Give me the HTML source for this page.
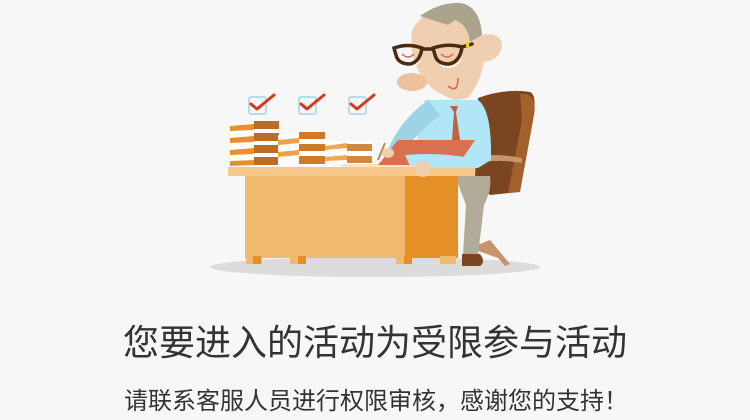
<!DOCTYPE html>
<html><head><meta charset="utf-8"><style>
html,body{margin:0;padding:0;background:#f7f7f7;width:750px;height:420px;overflow:hidden}
.t{position:absolute;left:0;width:750px;text-align:center;color:#333;font-family:"Liberation Sans","Noto Sans CJK SC",sans-serif}
</style></head><body>
<svg width="750" height="300" style="position:absolute;left:0;top:0" viewBox="0 0 750 300">
<ellipse cx="375" cy="267" rx="165" ry="10" fill="#dcdcdc"/>
<path d="M478 98 Q505 88 530 92 Q538 96 532 120 L518 192 L490 195 L475 178 Z" fill="#7a4520"/>
<path d="M520 94 Q538 92 534 115 L520 192 L508 193 L522 120 Z" fill="#a2602a"/>
<path d="M465 158 Q495 152 522 158 L522 163 Q495 158 470 165 Z" fill="#c9946a"/>
<path d="M490 240 L505 258 L510 264 L505 266 L498 258 L470 248 Z" fill="#c9946a"/>
<path d="M455 176 L490 176 Q492 190 484 205 L478 255 L463 255 L466 205 Z" fill="#b3ab99"/>
<path d="M462 254 L480 254 Q486 262 480 266 L462 266 Z" fill="#7a4520"/>
<rect x="228" y="167" width="247" height="9" fill="#f6c98b"/>
<rect x="245" y="176" width="160" height="82" fill="#f0b96c"/>
<rect x="405" y="176" width="53" height="82" fill="#e58f27"/>
<rect x="246" y="256" width="16" height="8" fill="#f0b96c"/><rect x="253" y="256" width="8" height="8" fill="#e58f27"/>
<rect x="290" y="256" width="16" height="8" fill="#f0b96c"/><rect x="298" y="256" width="8" height="8" fill="#e58f27"/>
<rect x="396" y="256" width="16" height="8" fill="#f0b96c"/><rect x="404" y="256" width="8" height="8" fill="#e58f27"/>
<rect x="440" y="256" width="16" height="8" fill="#f0b96c"/>
<g>
<rect x="230" y="122" width="48" height="44" fill="#fff"/>
<rect x="254" y="121" width="25" height="8" fill="#b86e26"/><rect x="254" y="133" width="25" height="8" fill="#b86e26"/><rect x="254" y="145" width="25" height="8" fill="#b86e26"/><rect x="254" y="157" width="25" height="8" fill="#b86e26"/>
<path d="M230 126 L254 124 L254 130 L230 131 Z M230 138 L254 136 L254 142 L230 143 Z M230 150 L254 148 L254 154 L230 155 Z M230 161 L254 160 L254 165 L230 166 Z" fill="#e8902c"/>
<rect x="278" y="135" width="47" height="31" fill="#fff"/>
<rect x="299" y="132" width="26" height="7" fill="#d07a26"/><rect x="299" y="144" width="26" height="7" fill="#d07a26"/><rect x="299" y="156" width="26" height="8" fill="#d07a26"/>
<path d="M278 140 L299 138 L299 143 L278 145 Z M278 152 L299 150 L299 155 L278 157 Z" fill="#f0a040"/>
<rect x="325" y="141" width="47" height="25" fill="#fff"/>
<rect x="347" y="144" width="25" height="7" fill="#d08a40"/><rect x="347" y="156" width="25" height="7" fill="#d08a40"/>
<path d="M325 146 L347 143 L347 148 L325 150 Z M325 157 L347 155 L347 160 L325 161 Z" fill="#f0a848"/>
</g>
<g fill="none" stroke="#9fd6e8" stroke-width="1.5">
<rect x="249" y="97" width="17" height="17" rx="2"/><rect x="299" y="97" width="17" height="17" rx="2"/><rect x="349" y="97" width="17" height="17" rx="2"/></g>
<g fill="none" stroke="#d23a1e" stroke-width="3" stroke-linecap="round" stroke-linejoin="round">
<path d="M251 104 L257 109 L274 95"/><path d="M301 104 L307 109 L324 95"/><path d="M351 104 L357 109 L374 95"/></g>
<rect x="342" y="164" width="82" height="3" fill="#fbe3c4"/>
<path d="M378 160 L385 143" stroke="#c08a50" stroke-width="2"/>
<path d="M425 100 L478 100 Q492 110 491 160 L478 168 L425 168 Q410 140 425 100 Z" fill="#b0e6f5"/>
<path d="M428 100 Q400 120 388 150 L398 158 Q415 135 440 115 Z" fill="#9dd3e6"/>
<path d="M450 106 L458 106 L456 112 L460 140 L452 140 L454 112 Z" fill="#c0623f"/>
<path d="M398 140 L475 140 L458 165 L378 165 Z" fill="#d9704f"/>
<path d="M405 155 Q440 152 470 158 L468 166 L410 166 Z" fill="#b0e6f5"/>
<ellipse cx="423" cy="169" rx="8" ry="8" fill="#efcfb0"/>
<ellipse cx="388" cy="153" rx="6" ry="5" fill="#efcfb0"/>
<path d="M412 30 Q425 8 452 6 Q478 8 482 35 Q490 70 468 98 L455 100 Q432 92 425 80 Q408 60 412 30 Z" fill="#efcfb0"/>
<path d="M478 36 Q500 30 502 45 Q500 62 480 62 Z" fill="#efcfb0"/>
<path d="M420 16 Q440 2 460 3 Q480 6 482 35 L470 42 Q468 25 455 20 L448 25 Z" fill="#a9a48b"/>
<ellipse cx="412" cy="82" rx="15" ry="9" fill="#ebc29c"/>
<path d="M448 86 Q458 94 458 78" fill="none" stroke="#d5634a" stroke-width="1.5"/>
<g fill="none" stroke="#fff" stroke-width="1.5"><path d="M396 58 Q400 68 410 67 Q418 66 421 56"/><path d="M436 58 Q440 68 450 67 Q459 66 461 56"/></g>
<g fill="none" stroke="#4a2c12" stroke-width="3.5" stroke-linecap="round"><path d="M394 48 Q408 43 422 48 Q420 62 410 64 Q398 64 396 55 Z"/><path d="M433 48 Q448 43 462 47 Q460 62 449 64 Q437 64 435 55 Z"/><path d="M422 49 L433 49 M462 47 L472 44"/></g>
<rect x="466" y="42" width="3" height="5" fill="#f2d020"/>
<g fill="none" stroke="#d5634a" stroke-width="1.3"><path d="M402 54 Q408 60 414 54"/><path d="M441 54 Q447 60 453 54"/></g>
</svg>
<div class="t" style="top:321px;font-size:36px;line-height:44px;">您要进入的活动为受限参与活动</div>
<div class="t" style="top:388px;left:124px;width:auto;text-align:left;font-size:24px;line-height:28px;">请联系客服人员进行权限审核，感谢您的支持！</div>
</body></html>
